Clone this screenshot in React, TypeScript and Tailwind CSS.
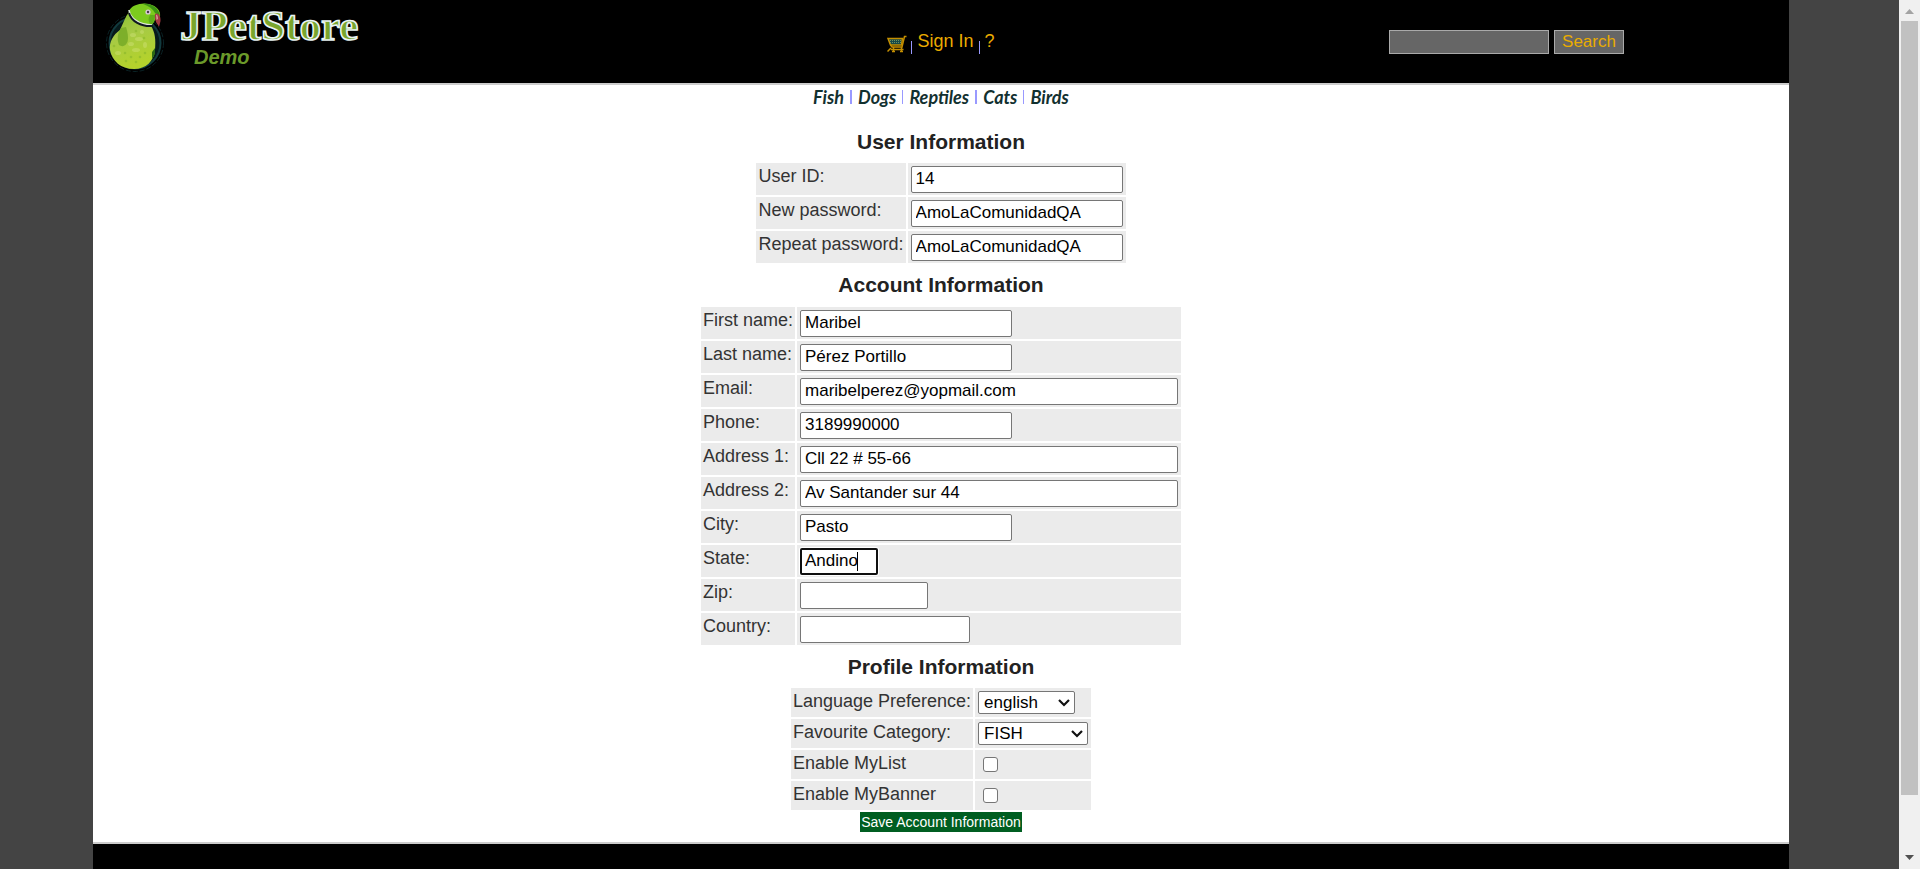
import React from "react";

const inputBase =
  "block h-[27px] rounded-[2px] bg-white text-[17px] leading-5 text-black outline-none";
const inputIdle = "border border-[#767676] px-1";
const inputFocused = "border-2 border-[#101010] px-[3px] ring-1 ring-white";
const labelCell = "bg-[#ebebeb] px-0.5 pt-px align-top whitespace-nowrap";
const fieldCell = "bg-[#ebebeb] px-[3px] align-middle";
const tableBase = "mx-auto border-separate border-spacing-[2px] text-[18px] leading-6 text-[#333]";
const headingBase = "text-center text-[21px] leading-7 font-bold text-[#222]";

type Field = { id: string; label: string; value: string; width: string };

const userFields: Field[] = [
  { id: "user-id", label: "User ID:", value: "14", width: "w-[212px]" },
  { id: "new-password", label: "New password:", value: "AmoLaComunidadQA", width: "w-[212px]" },
  { id: "repeat-password", label: "Repeat password:", value: "AmoLaComunidadQA", width: "w-[212px]" },
];

const accountFields: Field[] = [
  { id: "first-name", label: "First name:", value: "Maribel", width: "w-[212px]" },
  { id: "last-name", label: "Last name:", value: "Pérez Portillo", width: "w-[212px]" },
  { id: "email", label: "Email:", value: "maribelperez@yopmail.com", width: "w-[378px]" },
  { id: "phone", label: "Phone:", value: "3189990000", width: "w-[212px]" },
  { id: "address1", label: "Address 1:", value: "Cll 22 # 55-66", width: "w-[378px]" },
  { id: "address2", label: "Address 2:", value: "Av Santander sur 44", width: "w-[378px]" },
  { id: "city", label: "City:", value: "Pasto", width: "w-[212px]" },
  { id: "state", label: "State:", value: "Andino", width: "w-[78px]" },
  { id: "zip", label: "Zip:", value: "", width: "w-[128px]" },
  { id: "country", label: "Country:", value: "", width: "w-[170px]" },
];

function FieldTable({ fields }: { fields: Field[] }) {
  return (
    <table className={tableBase}>
      <tbody>
        {fields.map((f) => (
          <tr key={f.id} className="h-8">
            <td className={labelCell}>
              <label htmlFor={f.id}>{f.label}</label>
            </td>
            <td className={fieldCell}>
              {f.id === "state" ? (
                <div className="relative w-fit">
                  <input
                    id={f.id}
                    defaultValue={f.value}
                    className={`${inputBase} ${inputFocused} ${f.width}`}
                  />
                  <span className="absolute top-1 left-[57px] h-[19px] w-px bg-black" />
                </div>
              ) : (
                <input
                  id={f.id}
                  defaultValue={f.value}
                  className={`${inputBase} ${inputIdle} ${f.width}`}
                />
              )}
            </td>
          </tr>
        ))}
      </tbody>
    </table>
  );
}

function Dropdown({ id, value, width }: { id: string; value: string; width: string }) {
  return (
    <div className={`relative ${width}`}>
      <select
        id={id}
        defaultValue={value}
        className="block h-[23px] w-full appearance-none rounded-[2px] border border-[#767676] bg-white pl-[5px] text-[17px] leading-5 text-black"
      >
        <option>{value}</option>
      </select>
      <svg
        viewBox="0 0 12 8"
        className="pointer-events-none absolute top-2 right-[5px] h-2 w-3"
        fill="none"
        stroke="#111"
        strokeWidth="2.2"
      >
        <path d="M1 1l5 5 5-5" />
      </svg>
    </div>
  );
}

function CheckRow({ id, label }: { id: string; label: string }) {
  return (
    <tr className="h-[29px]">
      <td className={labelCell}>
        <label htmlFor={id}>{label}</label>
      </td>
      <td className={fieldCell}>
        <input
          id={id}
          type="checkbox"
          className="ml-[5px] block size-[15px] appearance-none rounded-[3px] border border-[#767676] bg-white"
        />
      </td>
    </tr>
  );
}

function Parrot() {
  return (
    <svg viewBox="0 0 66 76" className="h-[76px] w-[66px]" aria-hidden="true">
      <defs>
        <linearGradient id="body" x1="0" y1="0" x2="0.3" y2="1">
          <stop offset="0" stopColor="#86c02f" />
          <stop offset="0.45" stopColor="#a6ca45" />
          <stop offset="1" stopColor="#b4d22c" />
        </linearGradient>
      </defs>
      <circle cx="35" cy="43" r="28.500" fill="none" stroke="#0a2225" strokeWidth="1" strokeDasharray="5 2" />
      <circle cx="35" cy="43" r="25.500" fill="#061a1c" stroke="#123a3e" strokeWidth="2" />
      <path
        d="M29 12C25 17 23 24 20 30C13 35 9 42 10 50C12 61 21 69 34 69C46 69 54 61 55 50C56 40 55 32 51 26C42 24 34 20 29 12Z"
        fill="url(#body)"
      />
      <path d="M21 28C17 34 17 40 19 45C23 48 28 45 28 38C28 34 27 30 26 27Z" fill="#79ac28" opacity="0.9" />
      <path d="M29 11C31 5 42 2 49 4C57 6 61 11 60 17L56 16C55 20 54 24 50 26C40 25 31 19 29 11Z" fill="#7ccb1e" />
      <path d="M43 4C51 3 59 8 60 16L55 13C53 9 49 6 43 4Z" fill="#3c9414" />
      <path d="M50 15L55 15C55 19 54 23 51 25C48 22 48 18 50 15Z" fill="#5fae18" />
      <path d="M29 10C30 18 39 25 52 25" fill="none" stroke="#dfe8dc" strokeWidth="1.600" />
      <path d="M29 13C31 21 41 27 53 26" fill="none" stroke="#101822" strokeWidth="2" />
      <circle cx="48" cy="12" r="2.600" fill="#d9c9d8" />
      <circle cx="48" cy="12" r="1.200" fill="#4a3a4c" />
      <path d="M55 14C58 12 61 16 60.500 21L59 27C58 24 54 22 55 14Z" fill="#a33a42" />
      <path d="M56 15C57 14 58 16 58 19L56.500 20Z" fill="#d59a97" />
      <path d="M52 52l3-4v6l-3 5z" fill="#2d6b14" />
      <g fill="#dbe88a" opacity="0.35">
        <ellipse cx="33" cy="35" rx="3" ry="2" />
        <ellipse cx="39" cy="39" rx="4" ry="2" />
        <ellipse cx="31" cy="44" rx="3" ry="2" />
        <ellipse cx="36" cy="50" rx="4" ry="2" />
        <ellipse cx="45" cy="45" rx="2" ry="3" />
        <ellipse cx="18" cy="53" rx="3" ry="2" />
        <ellipse cx="42" cy="32" rx="2" ry="2" />
      </g>
      <g fill="#86b52a" opacity="0.55">
        <circle cx="25" cy="53" r="1.300" />
        <circle cx="31" cy="57" r="1.300" />
        <circle cx="40" cy="57" r="1.300" />
        <circle cx="45" cy="53" r="1.300" />
        <circle cx="36" cy="62" r="1.300" />
        <circle cx="26" cy="61" r="1.300" />
        <circle cx="44" cy="38" r="1.300" />
        <circle cx="36" cy="31" r="1.300" />
        <circle cx="14" cy="46" r="1.300" />
      </g>
    </svg>
  );
}

function Logo() {
  return (
    <a href="#" aria-label="JPetStore Demo" className="flex items-start pl-[7px]">
      <Parrot />
      <svg viewBox="0 0 210 76" className="h-[76px] w-[210px]">
        <text
          x="14"
          y="40"
          fontFamily="'Liberation Serif', serif"
          fontSize="43"
          fontWeight="bold"
          fill="#7aa52c"
          stroke="#e9f3f3"
          strokeWidth="1.600"
        >
          JPetStore
        </text>
        <text
          x="28"
          y="64"
          fontFamily="'Liberation Sans', sans-serif"
          fontSize="20"
          fontWeight="bold"
          fontStyle="italic"
          fill="#6b9a2a"
        >
          Demo
        </text>
      </svg>
    </a>
  );
}

function Cart() {
  return (
    <svg viewBox="0 0 20 18" className="h-[18px] w-5" fill="none" stroke="#c58f00" strokeWidth="1.500">
      <path d="M1 3.500H15.500L14.500 10H3.500Z" fill="#174a48" />
      <path d="M19.500 1.500H17.500L15 12H5L3.500 10M4 14.500H16.500M0.500 16.500L4 13" />
      <path d="M3 5.500H14M3 7.500H14" stroke="#6d8f60" strokeWidth="1" strokeDasharray="1 1" />
      <path d="M6.500 12V17M14.500 12V17M5 16.500H8M13 16.500H16" />
    </svg>
  );
}

const categories = ["Fish", "Dogs", "Reptiles", "Cats", "Birds"];

export default function App() {
  return (
    <div className="flex min-h-screen bg-[#444] font-['Liberation_Sans',Arial,sans-serif]">
      <div className="flex min-w-0 flex-1 flex-col pr-[110px] pl-[93px]">
        <header className="grid h-[83px] grid-cols-3 bg-black">
          <Logo />
          <nav className="flex items-start justify-center pt-[29px] text-[18px] leading-6 text-[#eaac00]">
            <a href="#" aria-label="Cart" className="pt-[6px]">
              <Cart />
            </a>
            <span className="mt-3 mr-[5px] ml-1 h-[13px] w-px bg-[#9999ff]" />
            <a href="#">Sign In</a>
            <span className="mt-3 mr-[5px] ml-[5px] h-[13px] w-px bg-[#9999ff]" />
            <a href="#">?</a>
          </nav>
          <form className="flex items-start justify-end gap-[5px] pt-[30px] pr-[165px]">
            <input
              aria-label="Search products"
              className="h-6 w-40 border border-[#aaa] bg-[#666] px-1 text-[17px] text-[#eaac00] outline-none"
            />
            <button
              type="button"
              className="h-6 w-[70px] border border-[#aaa] bg-[#666] text-[17px] leading-5 text-[#eaac00]"
            >
              Search
            </button>
          </form>
        </header>
        <main className="border-y-2 border-[#ccc] bg-white pb-[10px]">
          <nav className="flex h-6 items-center justify-center font-['Lato',sans-serif] text-[18px] leading-6 font-bold text-[#12302f] italic">
            {categories.map((c, i) => (
              <React.Fragment key={c}>
                {i > 0 && (
                  <span className={`mx-[6px] h-[14px] bg-[#9999ff] ${i % 2 === 1 ? "w-0.5" : "w-px"}`} />
                )}
                <a href="#">{c}</a>
              </React.Fragment>
            ))}
          </nav>
          <h3 className={`${headingBase} pt-[19px] pb-[5px]`}>User Information</h3>
          <FieldTable fields={userFields} />
          <h3 className={`${headingBase} py-[6px]`}>Account Information</h3>
          <FieldTable fields={accountFields} />
          <h3 className={`${headingBase} pt-[6px] pb-[5px]`}>Profile Information</h3>
          <table className={tableBase}>
            <tbody>
              <tr className="h-[29px]">
                <td className={labelCell}>
                  <label htmlFor="language">Language Preference:</label>
                </td>
                <td className={fieldCell}>
                  <Dropdown id="language" value="english" width="w-[97px]" />
                </td>
              </tr>
              <tr className="h-[29px]">
                <td className={labelCell}>
                  <label htmlFor="category">Favourite Category:</label>
                </td>
                <td className={fieldCell}>
                  <Dropdown id="category" value="FISH" width="w-[110px]" />
                </td>
              </tr>
              <CheckRow id="my-list" label="Enable MyList" />
              <CheckRow id="my-banner" label="Enable MyBanner" />
            </tbody>
          </table>
          <button
            type="button"
            className="mx-auto block h-5 bg-[#005e21] px-px text-[14px] leading-5 text-white"
          >
            Save Account Information
          </button>
        </main>
        <footer className="flex-1 bg-black" />
      </div>
      <div className="flex w-[21px] shrink-0 flex-col items-center bg-[#f0f0f0]" aria-hidden="true">
        <svg viewBox="0 0 9 5" className="mt-[9px] mb-[7px] h-[5px] w-[9px]">
          <path d="M0 5L4.500 0L9 5Z" fill="#a3a3a3" />
        </svg>
        <div className="w-[17px] flex-1 bg-[#c1c1c1]" />
        <svg viewBox="0 0 9 5" className="mt-[60px] mb-[9px] h-[5px] w-[9px]">
          <path d="M0 0L4.500 5L9 0Z" fill="#505050" />
        </svg>
      </div>
    </div>
  );
}
